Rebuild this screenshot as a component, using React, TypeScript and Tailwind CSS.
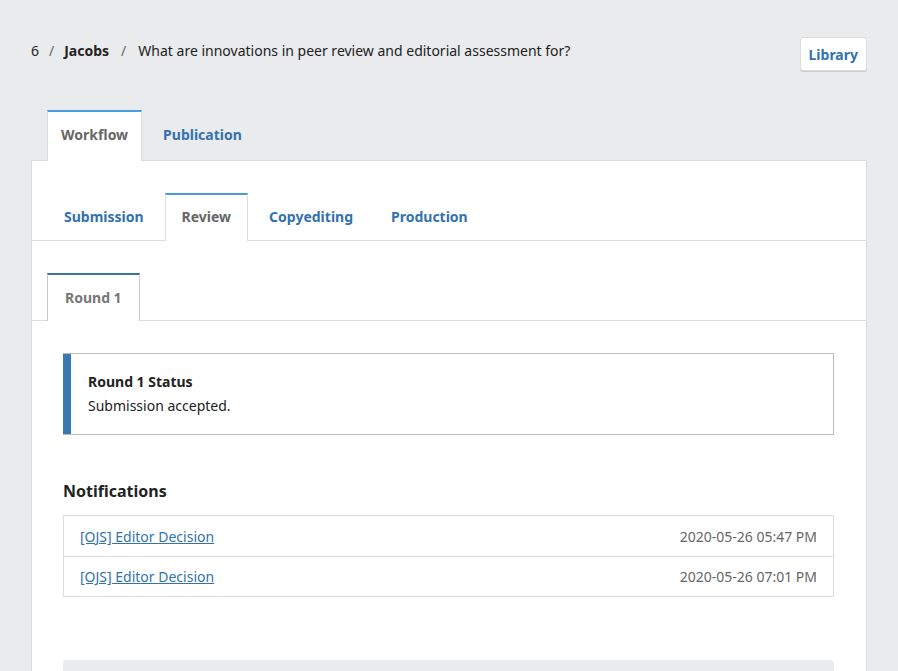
const font = { fontFamily: '"Noto Sans", "Open Sans", sans-serif' }

const stageTabs = ['Submission', 'Review', 'Copyediting', 'Production']

const notifications = [
  { title: '[OJS] Editor Decision', date: '2020-05-26 05:47 PM' },
  { title: '[OJS] Editor Decision', date: '2020-05-26 07:01 PM' },
]

export default function App() {
  return (
    <div className="min-h-screen bg-[#eaebed] pl-[31px] pr-[31px] text-[#222]" style={font}>
      {/* Header */}
      <div className="flex items-start justify-between pt-[37px]">
        <div className="mt-[4px] flex items-center text-[14px] leading-5 text-[#222]">
          <span>6</span>
          <span className="mx-[10px] text-[#666]">/</span>
          <span className="font-bold">Jacobs</span>
          <span className="mx-[12px] text-[#666]">/</span>
          <span>What are innovations in peer review and editorial assessment for?</span>
        </div>
        <button className="h-[34px] rounded-[3px] border border-[#ddd] bg-white px-[8px] text-[14px] font-bold text-[#3272ad] shadow-[0_1px_0_#ccc]">
          Library
        </button>
      </div>

      {/* Top tabs */}
      <div className="mt-[39px] flex pl-[16px]">
        <div className="relative -mb-px h-[51px] border-x border-t-2 border-[#ddd] border-t-[#4a9be2] bg-white px-[13px] pt-[12px] text-[14px] font-bold text-[#666]">
          Workflow
        </div>
        <div className="ml-[7px] h-[50px] px-[14px] pt-[14px] text-[14px] font-bold text-[#3272ad]">Publication</div>
      </div>

      {/* Panel */}
      <div className="min-h-[520px] border border-[#ddd] bg-white">
        {/* Stage tabs */}
        <div className="mt-[32px] flex gap-[4px] border-b border-[#ddd] pl-[15px]">
          {stageTabs.map((t) => (
            <div
              key={t}
              className={
                t === 'Review'
                  ? 'relative -mb-px h-[48px] border-x border-t-2 border-[#ddd] border-t-[#4a9be2] bg-white px-[16px] pt-[11px] text-[14px] font-bold text-[#666]'
                  : 'h-[47px] px-[17px] pt-[13px] text-[14px] font-bold text-[#3272ad]'
              }
            >
              {t}
            </div>
          ))}
        </div>

        {/* Round tabs */}
        <div className="mt-[32px] flex border-b border-[#ddd] pl-[15px]">
          <div className="relative -mb-px h-[48px] border-x border-t-2 border-[#ccc] border-t-[#3872a8] bg-white px-[17px] pt-[12px] text-[14px] font-bold text-[#777]">
            Round 1
          </div>
        </div>

        <div className="pl-[31px] pr-[32px] pt-[32px]">
          {/* Status */}
          <div className="flex h-[82px] border border-l-0 border-[#bbb]">
            <div className="w-[8px] shrink-0 bg-[#3a78b1]" />
            <div className="pl-[17px] pt-[16px] text-[14px] leading-6">
              <div className="font-bold text-[#222]">Round 1 Status</div>
              <div className="text-[#222]">Submission accepted.</div>
            </div>
          </div>

          {/* Notifications */}
          <h2 className="mt-[44px] text-[16px] font-bold leading-6 text-[#222]">Notifications</h2>
          <div className="mt-[12px] border border-[#ddd]">
            {notifications.map((n, i) => (
              <div
                key={i}
                className={`flex h-[40px] items-center justify-between px-[16px] text-[14px] ${i > 0 ? 'border-t border-[#ddd]' : ''}`}
              >
                <a href="#" className="text-[#3272ad] underline">
                  {n.title}
                </a>
                <span className="text-[#666]">{n.date}</span>
              </div>
            ))}
          </div>

          <div className="mt-[63px] h-[60px] rounded-[4px] bg-[#eaebed]" />
        </div>
      </div>
    </div>
  )
}
